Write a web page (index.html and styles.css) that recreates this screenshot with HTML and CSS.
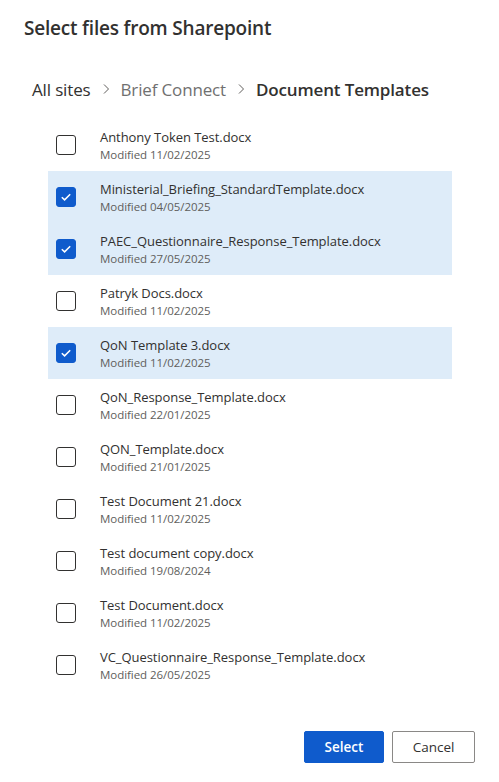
FILE: index.html
```html
<!DOCTYPE html>
<html>
<head>
<meta charset="utf-8">
<link rel="stylesheet" href="styles.css">
</head>
<body>
<div class="dialog">
  <h1 class="title">Select files from Sharepoint</h1>
  <nav class="crumbs">
    <span class="crumb">All sites</span>
    <span class="sep"><svg width="10" height="12" viewBox="0 0 10 12"><path d="M3 1.5 L7.5 6 L3 10.5" fill="none" stroke="#605e5c" stroke-width="1"/></svg></span>
    <span class="crumb muted">Brief Connect</span>
    <span class="sep"><svg width="10" height="12" viewBox="0 0 10 12"><path d="M3 1.5 L7.5 6 L3 10.5" fill="none" stroke="#605e5c" stroke-width="1"/></svg></span>
    <span class="crumb current">Document Templates</span>
  </nav>
  <ul class="list">
    <li class="row"><span class="box"></span><div class="info"><div class="name">Anthony Token Test.docx</div><div class="date">Modified 11/02/2025</div></div></li>
    <li class="row selected"><span class="box checked"><svg width="14" height="14" viewBox="0 0 14 14"><path d="M2.8 7.2 L5.6 9.9 L11.2 4.3" fill="none" stroke="#fff" stroke-width="1.5"/></svg></span><div class="info"><div class="name">Ministerial_Briefing_StandardTemplate.docx</div><div class="date">Modified 04/05/2025</div></div></li>
    <li class="row selected"><span class="box checked"><svg width="14" height="14" viewBox="0 0 14 14"><path d="M2.8 7.2 L5.6 9.9 L11.2 4.3" fill="none" stroke="#fff" stroke-width="1.5"/></svg></span><div class="info"><div class="name">PAEC_Questionnaire_Response_Template.docx</div><div class="date">Modified 27/05/2025</div></div></li>
    <li class="row"><span class="box"></span><div class="info"><div class="name">Patryk Docs.docx</div><div class="date">Modified 11/02/2025</div></div></li>
    <li class="row selected"><span class="box checked"><svg width="14" height="14" viewBox="0 0 14 14"><path d="M2.8 7.2 L5.6 9.9 L11.2 4.3" fill="none" stroke="#fff" stroke-width="1.5"/></svg></span><div class="info"><div class="name">QoN Template 3.docx</div><div class="date">Modified 11/02/2025</div></div></li>
    <li class="row"><span class="box"></span><div class="info"><div class="name">QoN_Response_Template.docx</div><div class="date">Modified 22/01/2025</div></div></li>
    <li class="row"><span class="box"></span><div class="info"><div class="name">QON_Template.docx</div><div class="date">Modified 21/01/2025</div></div></li>
    <li class="row"><span class="box"></span><div class="info"><div class="name">Test Document 21.docx</div><div class="date">Modified 11/02/2025</div></div></li>
    <li class="row"><span class="box"></span><div class="info"><div class="name">Test document copy.docx</div><div class="date">Modified 19/08/2024</div></div></li>
    <li class="row"><span class="box"></span><div class="info"><div class="name">Test Document.docx</div><div class="date">Modified 11/02/2025</div></div></li>
    <li class="row"><span class="box"></span><div class="info"><div class="name">VC_Questionnaire_Response_Template.docx</div><div class="date">Modified 26/05/2025</div></div></li>
  </ul>
  <div class="footer">
    <button class="btn primary">Select</button>
    <button class="btn">Cancel</button>
  </div>
</div>
</body>
</html>
```
FILE: styles.css
```css
* { box-sizing: border-box; }
html, body { margin: 0; padding: 0; background: #fff; }
body { font-family: "Open Sans", "Noto Sans", sans-serif; color: #323130; }
.dialog { width: 499px; height: 782px; display: flex; flex-direction: column; }
.title {
  margin: 0;
  padding: 14px 0 0 24px;
  font-size: 19px;
  line-height: 28px;
  font-weight: 600;
  color: #323130;
  letter-spacing: -0.2px;
}
.crumbs {
  display: flex;
  align-items: center;
  margin-top: 33px;
  padding-left: 32px;
  height: 28px;
  font-size: 17px;
  letter-spacing: -0.15px;
}
.sep { display: flex; align-items: center; width: 28px; justify-content: center; margin: 0 1px; }
.crumb { color: #323130; }
.crumb.muted { color: #707070; }
.crumb.current { font-weight: 600; color: #323130; }
.list { list-style: none; margin: 16px 47px 0 48px; padding: 0; }
.row { height: 52px; display: flex; align-items: center; }
.row.selected { background: #deecf9; }
.box {
  width: 20px; height: 20px;
  margin-left: 8px;
  margin-right: 24px;
  border: 1.5px solid #323130;
  border-radius: 3px;
  display: flex; align-items: center; justify-content: center;
  flex: none;
}
.box.checked { background: #0f5bcc; border-color: #0f5bcc; }
.info { display: flex; flex-direction: column; gap: 1px; }
.name { font-size: 13px; line-height: 18px; color: #323130; letter-spacing: -0.05px; }
.date { font-size: 11.5px; line-height: 16px; color: #605e5c; letter-spacing: -0.05px; }
.footer {
  display: flex;
  justify-content: flex-end;
  gap: 8px;
  margin-top: 40px;
  padding-right: 24px;
}
.btn {
  height: 32px;
  padding: 0;
  width: 83px;
  font-family: inherit;
  font-size: 13.5px;
  font-weight: 400;
  color: #323130;
  background: #fff;
  border: 1px solid #8a8886;
  border-radius: 2px;
}
.btn.primary { width: 80px; background: #0f5bcc; border-color: #0f5bcc; color: #fff; font-weight: 600; }
```
